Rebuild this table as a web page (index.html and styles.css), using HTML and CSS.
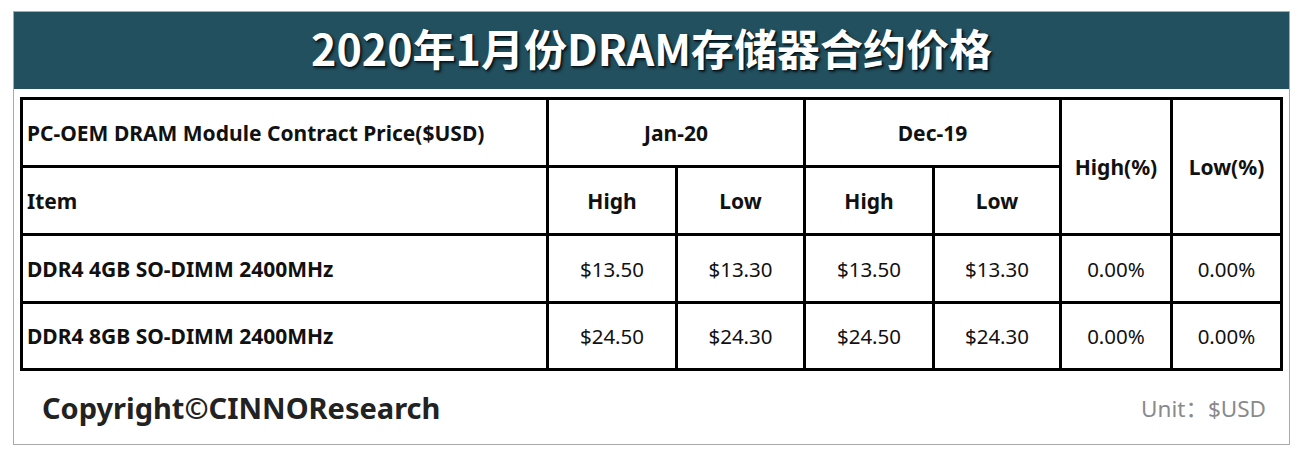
FILE: index.html
```html
<!DOCTYPE html>
<html lang="zh">
<head>
<meta charset="utf-8">
<link rel="stylesheet" href="styles.css">
</head>
<body>
<div class="frame">
  <div class="banner"><h1 class="title">2020年1月份DRAM存储器合约价格</h1></div>
  <div class="sheet">
    <div class="grid">
      <div class="cell left c1 r1">PC-OEM DRAM Module Contract Price($USD)</div>
      <div class="cell head jan">Jan-20</div>
      <div class="cell head dec">Dec-19</div>
      <div class="cell head pct hp">High(%)</div>
      <div class="cell head pct lp">Low(%)</div>
      <div class="cell left">Item</div>
      <div class="cell head">High</div>
      <div class="cell head">Low</div>
      <div class="cell head">High</div>
      <div class="cell head">Low</div>

      <div class="cell left">DDR4 4GB SO-DIMM 2400MHz</div>
      <div class="cell num">$13.50</div>
      <div class="cell num">$13.30</div>
      <div class="cell num">$13.50</div>
      <div class="cell num">$13.30</div>
      <div class="cell num">0.00%</div>
      <div class="cell num">0.00%</div>

      <div class="cell left">DDR4 8GB SO-DIMM 2400MHz</div>
      <div class="cell num">$24.50</div>
      <div class="cell num">$24.30</div>
      <div class="cell num">$24.50</div>
      <div class="cell num">$24.30</div>
      <div class="cell num">0.00%</div>
      <div class="cell num">0.00%</div>
    </div>
  </div>
  <div class="footer">
    <span class="copy">Copyright©CINNOResearch</span>
    <span class="unit">Unit：$USD</span>
  </div>
</div>
</body>
</html>
```
FILE: styles.css
```css
* { box-sizing: border-box; }
body {
  margin: 0;
  background: #fff;
  font-family: "Noto Sans", "Noto Sans CJK SC", sans-serif;
}
.frame {
  margin: 11px 0 0 13px;
  width: 1277px;
  height: 434px;
  border: 1px solid #a9a9a9;
  display: flex;
  flex-direction: column;
}
.banner {
  height: 77px;
  background: #23505e;
  display: flex;
  align-items: center;
  justify-content: center;
  padding-bottom: 7px;
}
.title {
  margin: 0;
  color: #fff;
  font-family: "Noto Sans CJK SC", sans-serif;
  font-weight: 700;
  font-size: 43px;
  line-height: 1;
  text-shadow: 2px 2px 3px #061a22, 1px 1px 1px #000;
}
.sheet {
  padding: 8px 0 0 6px;
}
.grid {
  display: grid;
  grid-template-columns: 523px 126px 125px 126px 124px 108px 107px;
  grid-template-rows: 65px 65px 65px 64px;
  gap: 3px;
  padding: 3px;
  width: 1263px;
  background: #000;
}
.cell {
  background: #fff;
  display: flex;
  align-items: center;
  justify-content: center;
  font-size: 21px;
  color: #111;
}
.left {
  justify-content: flex-start;
  padding-left: 4px;
  font-weight: 700;
}
.head { font-weight: 700; }
.jan { grid-column: 2 / span 2; }
.dec { grid-column: 4 / span 2; }
.hp { grid-column: 6; grid-row: 1 / span 2; }
.lp { grid-column: 7; grid-row: 1 / span 2; }
.num { font-weight: 400; font-size: 20.5px; }
.footer {
  flex: 1;
  display: flex;
  align-items: center;
  justify-content: space-between;
  padding: 0 23px 0 28px;
}
.copy {
  font-size: 29px;
  font-weight: 700;
  color: #222;
}
.unit {
  font-size: 22.5px;
  color: #8a8a8a;
}
```
